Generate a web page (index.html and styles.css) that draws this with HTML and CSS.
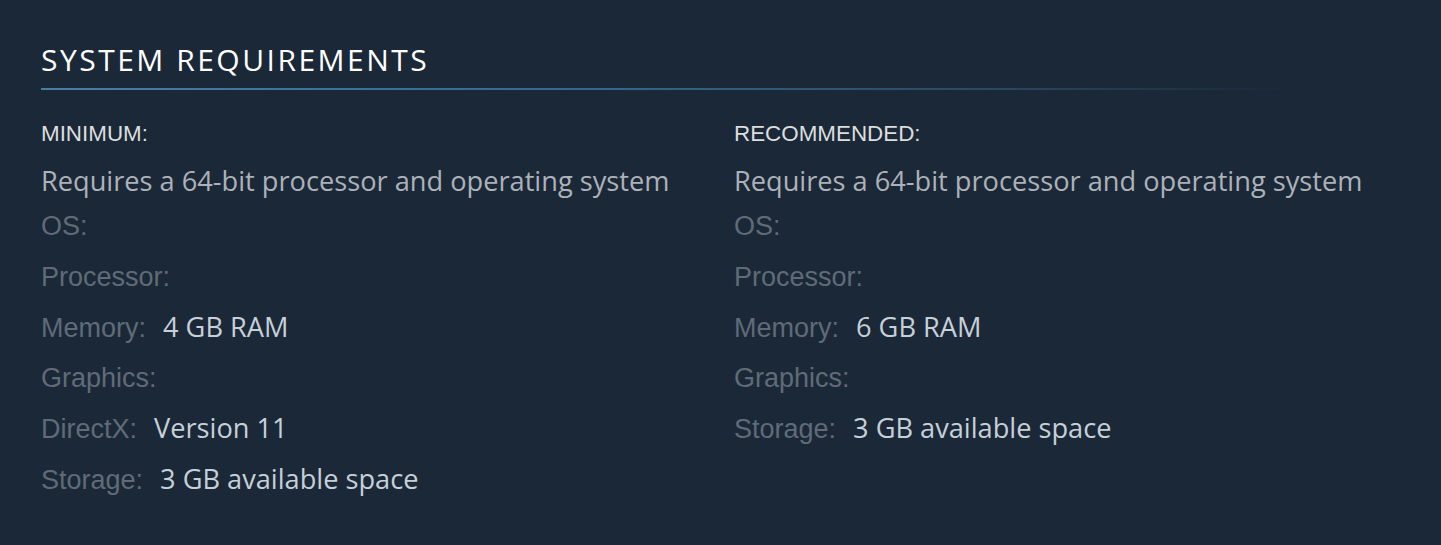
FILE: index.html
```html
<!DOCTYPE html>
<html>
<head>
<meta charset="utf-8">
<link rel="stylesheet" href="styles.css">
</head>
<body>
<section class="sysreq">
  <h2 class="title">SYSTEM REQUIREMENTS</h2>
  <div class="cols">
    <div class="col">
      <div class="tier">MINIMUM:</div>
      <ul class="specs">
        <li class="note">Requires a 64-bit processor and operating system</li>
        <li><span class="lbl">OS:</span></li>
        <li><span class="lbl">Processor:</span></li>
        <li><span class="lbl">Memory:</span><span class="val">4 GB RAM</span></li>
        <li><span class="lbl">Graphics:</span></li>
        <li><span class="lbl">DirectX:</span><span class="val">Version 11</span></li>
        <li><span class="lbl">Storage:</span><span class="val">3 GB available space</span></li>
      </ul>
    </div>
    <div class="col">
      <div class="tier">RECOMMENDED:</div>
      <ul class="specs">
        <li class="note">Requires a 64-bit processor and operating system</li>
        <li><span class="lbl">OS:</span></li>
        <li><span class="lbl">Processor:</span></li>
        <li><span class="lbl">Memory:</span><span class="val">6 GB RAM</span></li>
        <li><span class="lbl">Graphics:</span></li>
        <li><span class="lbl">Storage:</span><span class="val">3 GB available space</span></li>
      </ul>
    </div>
  </div>
</section>
</body>
</html>
```
FILE: styles.css
```css
html, body {
  margin: 0;
  padding: 0;
  background: #1b2838;
}
body {
  width: 1441px;
  height: 545px;
  overflow: hidden;
}
.sysreq {
  padding: 40px 0 0 41px;
}
.title {
  margin: 0;
  font-family: "Open Sans", sans-serif;
  font-weight: 400;
  font-size: 30px;
  line-height: 40px;
  color: #ffffff;
  letter-spacing: 2.5px;
  padding-bottom: 10px;
  width: 1250px;
  background: linear-gradient(to right, #477fa3 0%, #35678a 45%, #2a4a64 75%, rgba(42,66,88,0) 100%) no-repeat left bottom / 100% 2px;
}
.cols {
  display: flex;
  margin-top: 32px;
}
.col {
  width: 693px;
}
.tier {
  font-family: "Liberation Sans", Arial, sans-serif;
  font-size: 22.4px;
  line-height: 24px;
  color: #dcdedf;
  text-transform: uppercase;
}
.specs {
  list-style: none;
  margin: 15px 0 0;
  padding: 0;
}
.specs li {
  font-family: "Liberation Sans", Arial, sans-serif;
  font-size: 27px;
  line-height: 50.5px;
  height: 50.5px;
  white-space: nowrap;
}
.specs li.note {
  font-family: "Open Sans", sans-serif;
  font-size: 27.2px;
  color: #acb2b8;
  line-height: 40px;
  height: 40px;
}
.lbl {
  color: #5f6b77;
}
.val {
  font-family: "Open Sans", sans-serif;
  font-size: 27.2px;
  color: #c6d0d9;
  margin-left: 17px;
}
```
